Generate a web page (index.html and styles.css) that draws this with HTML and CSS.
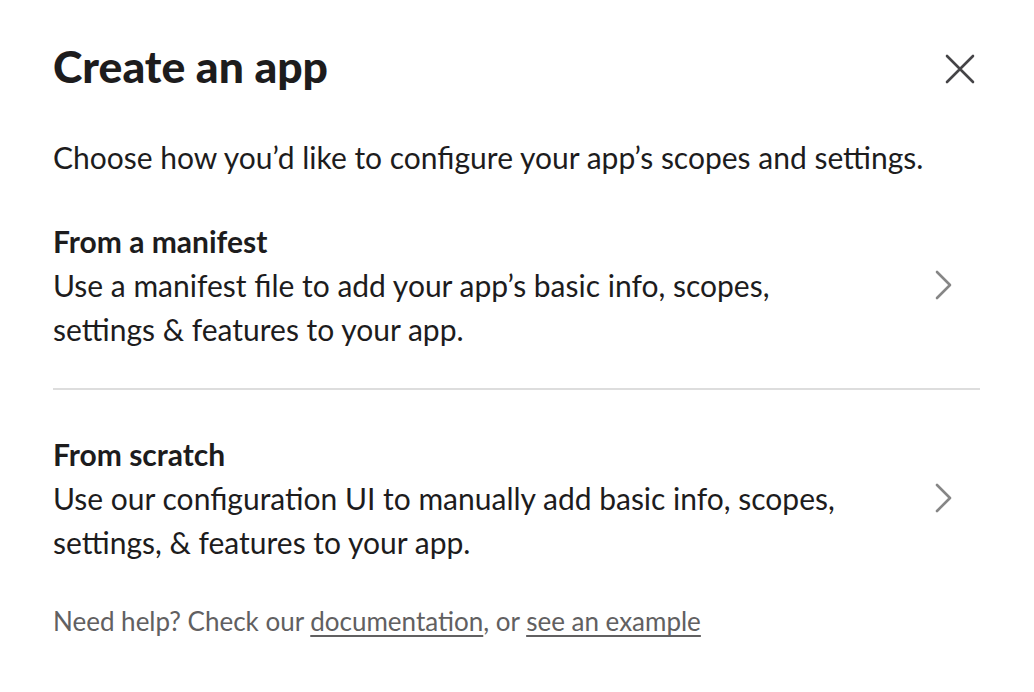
FILE: index.html
```html
<!DOCTYPE html>
<html>
<head>
<meta charset="utf-8">
<link rel="stylesheet" href="styles.css">
</head>
<body>
<div class="modal">
  <div class="header">
    <h1 class="title">Create an app</h1>
    <button class="close" aria-label="Close">
      <svg width="30" height="30" viewBox="0 0 30 30"><path d="M2 2 L28 28 M28 2 L2 28" stroke="#454447" stroke-width="2.6" stroke-linecap="round" fill="none"/></svg>
    </button>
  </div>
  <p class="intro">Choose how you’d like to configure your app’s scopes and settings.</p>
  <div class="option first">
    <div class="option-text">
      <div class="option-title">From a manifest</div>
      <div class="option-desc">Use a manifest file to add your app’s basic info, scopes,<br>settings &amp; features to your app.</div>
    </div>
    <svg class="chev" width="20" height="32" viewBox="0 0 20 32"><path d="M3 3 L16 16 L3 29" stroke="#868686" stroke-width="2.6" stroke-linecap="round" stroke-linejoin="round" fill="none"/></svg>
  </div>
  <div class="divider"></div>
  <div class="option">
    <div class="option-text">
      <div class="option-title">From scratch</div>
      <div class="option-desc">Use our configuration UI to manually add basic info, scopes,<br>settings, &amp; features to your app.</div>
    </div>
    <svg class="chev" width="20" height="32" viewBox="0 0 20 32"><path d="M3 3 L16 16 L3 29" stroke="#868686" stroke-width="2.6" stroke-linecap="round" stroke-linejoin="round" fill="none"/></svg>
  </div>
  <p class="help">Need help? Check our <a href="#">documentation</a>, or <a href="#">see an example</a></p>
</div>
</body>
</html>
```
FILE: styles.css
```css
html, body {
  margin: 0;
  padding: 0;
  background: #ffffff;
}
body {
  font-family: Lato, "Noto Sans", sans-serif;
  color: #1d1c1d;
}
.modal {
  width: 1034px;
  height: 692px;
  box-sizing: border-box;
  padding: 38px 54px 0 53px;
}
.header {
  display: flex;
  justify-content: space-between;
  align-items: center;
}
.title {
  margin: 0;
  font-size: 44.5px;
  font-weight: 900;
  line-height: 56px;
}
.close {
  border: 0;
  background: none;
  padding: 0;
  margin-right: 5px;
  margin-top: 6px;
  width: 30px;
  height: 30px;
  display: flex;
}
.intro {
  margin: 41px 0 0 0;
  font-size: 30px;
  line-height: 44px;
}
.option {
  display: flex;
  align-items: center;
  justify-content: space-between;
  padding: 0 26px 0 0;
}
.option.first {
  margin-top: 40px;
}
.option-title {
  font-size: 30px;
  font-weight: 700;
  line-height: 44px;
}
.option-desc {
  font-size: 30px;
  line-height: 44px;
}
.divider {
  height: 2px;
  background: #dddddd;
  margin-top: 37px;
  margin-bottom: 42px;
}
.help {
  margin: 40px 0 0 0;
  font-size: 26px;
  line-height: 34px;
  color: #616061;
}
.help a {
  color: #616061;
  text-decoration: underline;
  text-underline-offset: 4px;
}
```
